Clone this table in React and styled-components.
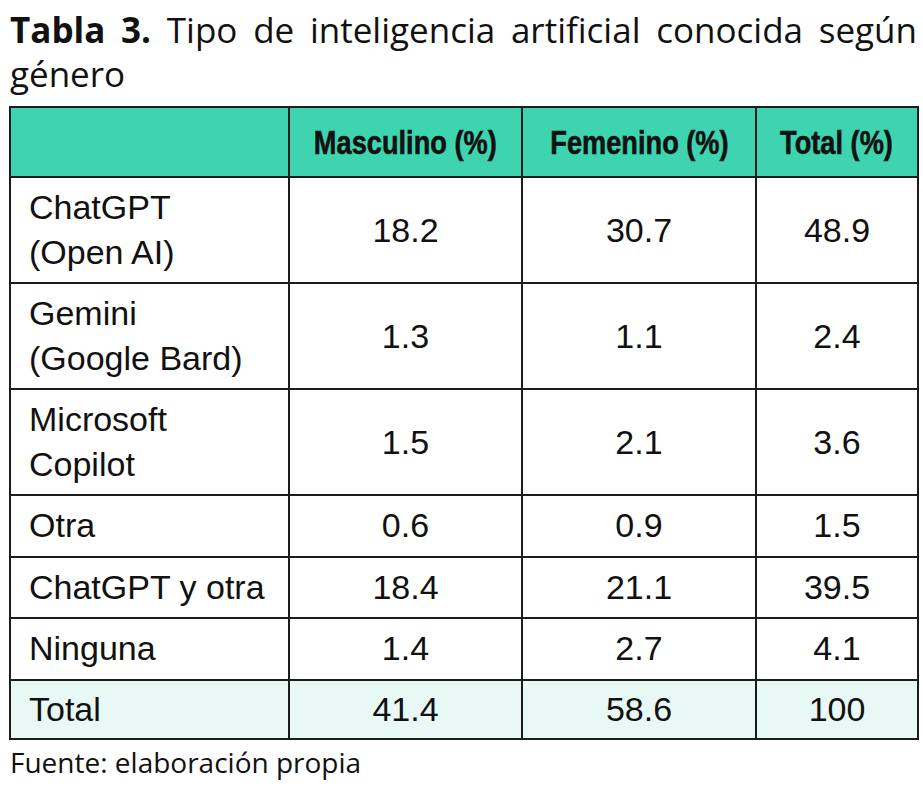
import React from 'react';
import styled, { createGlobalStyle } from 'styled-components';

const GlobalStyle = createGlobalStyle`
  html, body {
    margin: 0;
    padding: 0;
    background: #ffffff;
  }
  body {
    padding: 8px 6px 0 9px;
    color: #111111;
    font-family: 'Open Sans', 'Noto Sans', sans-serif;
  }
`;

const rows = [
  { name: ['ChatGPT', '(Open AI)'], m: '18.2', f: '30.7', t: '48.9' },
  { name: ['Gemini', '(Google Bard)'], m: '1.3', f: '1.1', t: '2.4' },
  { name: ['Microsoft', 'Copilot'], m: '1.5', f: '2.1', t: '3.6' },
  { name: ['Otra'], m: '0.6', f: '0.9', t: '1.5' },
  { name: ['ChatGPT y otra'], m: '18.4', f: '21.1', t: '39.5' },
  { name: ['Ninguna'], m: '1.4', f: '2.7', t: '4.1' },
];

export default function App() {
  return (
    <>
      <GlobalStyle />
      <Figure>
        <Caption>
          <Lead>Tabla 3.</Lead> Tipo de inteligencia artificial conocida según género
        </Caption>
        <Table>
          <colgroup>
            <col style={{ width: 279 }} />
            <col style={{ width: 233 }} />
            <col style={{ width: 234 }} />
            <col style={{ width: 162 }} />
          </colgroup>
          <thead>
            <HeadRow>
              <HeadCell />
              <HeadCell><HeadLabel>Masculino (%)</HeadLabel></HeadCell>
              <HeadCell><HeadLabel>Femenino (%)</HeadLabel></HeadCell>
              <HeadCell><HeadLabel>Total (%)</HeadLabel></HeadCell>
            </HeadRow>
          </thead>
          <tbody>
            {rows.map((r) => (
              <Row key={r.name.join(' ')} $tall={r.name.length > 1}>
                <NameCell>
                  {r.name.map((line, i) => (
                    <div key={i}>{line}</div>
                  ))}
                </NameCell>
                <NumCell>{r.m}</NumCell>
                <NumCell>{r.f}</NumCell>
                <NumCell>{r.t}</NumCell>
              </Row>
            ))}
            <Row $total>
              <NameCell>Total</NameCell>
              <NumCell>41.4</NumCell>
              <NumCell>58.6</NumCell>
              <NumCell>100</NumCell>
            </Row>
          </tbody>
        </Table>
        <Source>Fuente: elaboración propia</Source>
      </Figure>
    </>
  );
}

const Figure = styled.div`
  display: flex;
  flex-direction: column;
  width: 908px;
`;

const Caption = styled.p`
  margin: 0 0 10px 1px;
  font-family: 'Open Sans', 'Noto Sans', sans-serif;
  font-size: 35px;
  line-height: 44px;
  text-align: justify;
  color: #111111;
`;

const Lead = styled.strong`
  font-weight: 700;
`;

const Table = styled.table`
  width: 908px;
  table-layout: fixed;
  border-collapse: collapse;
  border: 2px solid #1c1c1c;
  font-family: 'Liberation Sans', Arial, sans-serif;
  font-size: 34px;
  color: #111111;
`;

const HeadRow = styled.tr`
  height: 70px;
  background: #3fd4b0;
`;

const HeadCell = styled.th`
  border: 2px solid #1c1c1c;
  padding: 0;
  text-align: center;
  vertical-align: middle;
  white-space: nowrap;
`;

const HeadLabel = styled.span`
  display: inline-block;
  font-family: 'Liberation Sans', Arial, sans-serif;
  font-weight: 700;
  font-size: 34px;
  line-height: 40px;
  transform: scaleX(0.8);
  -webkit-text-stroke: 0.6px #111111;
  margin: 0 -20px;
  color: #111111;
`;

const Row = styled.tr`
  height: ${(p) => (p.$tall ? '106px' : p.$total ? '59px' : '61.5px')};
  background: ${(p) => (p.$total ? '#e8f9f5' : '#ffffff')};
`;

const NameCell = styled.td`
  border: 2px solid #1c1c1c;
  padding: 0 8px 0 18px;
  line-height: 45px;
  vertical-align: middle;
  text-align: left;
`;

const NumCell = styled.td`
  border: 2px solid #1c1c1c;
  padding: 0 8px;
  line-height: 45px;
  vertical-align: middle;
  text-align: center;
`;

const Source = styled.p`
  margin: 2px 0 0 1px;
  font-family: 'Open Sans', 'Noto Sans', sans-serif;
  font-size: 28px;
  line-height: 40px;
  color: #111111;
`;
